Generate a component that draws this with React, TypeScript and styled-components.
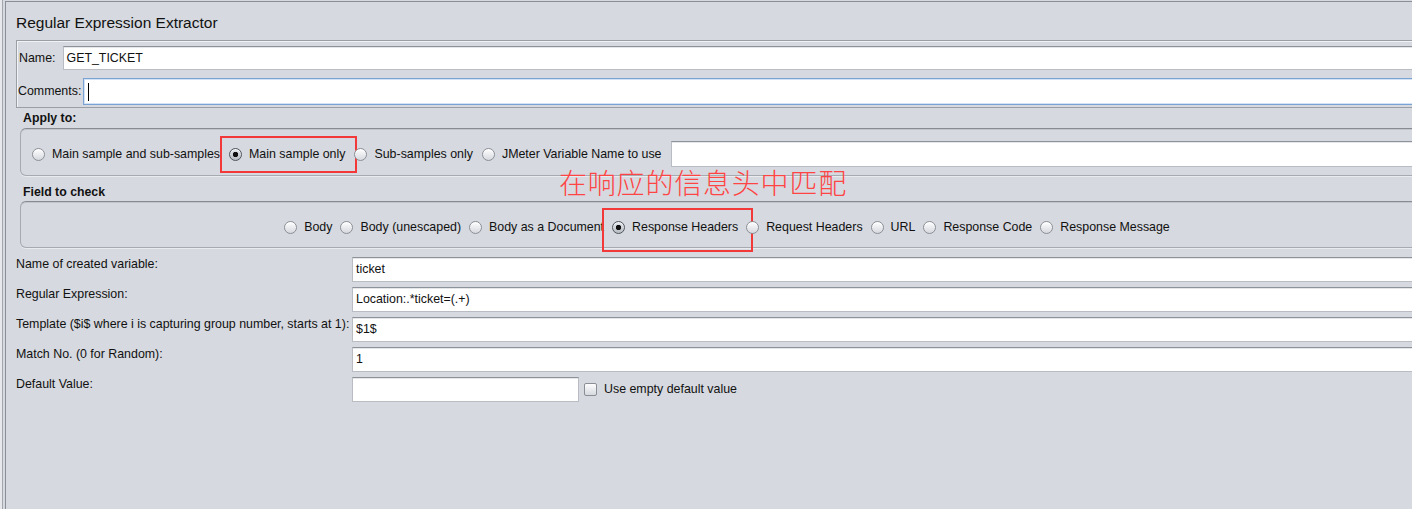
import React from "react";
import styled, { createGlobalStyle } from "styled-components";

const GlobalStyle = createGlobalStyle`
  html, body {
    margin: 0;
    padding: 0;
    overflow: hidden;
    background: #d6d9df;
  }
  body {
    font-family: "Liberation Sans", Arial, sans-serif;
  }
`;

const Page = styled.div`
  position: relative;
  width: 1446px;
  height: 509px;
  box-sizing: border-box;
  padding: 1px 0 0 5px;
  background: #d6d9df;
  box-shadow: inset 2px 0 0 #e6e8ec, inset 3px 0 0 #a2a6ad;
  font-family: "Liberation Sans", Arial, sans-serif;
  font-size: 12.4px;
  color: #111;
`;

const Frame = styled.div`
  height: 100%;
  box-sizing: border-box;
  border-left: 1px solid #8a8e96;
  border-top: 1px solid #8a8e96;
  padding: 0 12px 0 10px;
  display: flex;
  flex-direction: column;
`;

const Title = styled.div`
  margin-top: 12px;
  font-size: 15.5px;
  line-height: 18px;
  color: #111;
`;

const EtchedPanel = styled.div`
  margin-top: 8px;
  border: 1px solid #9a9ea5;
  box-shadow: inset 1px 1px 0 #f2f3f5;
  padding: 5px 0 2px 0;
  display: flex;
  flex-direction: column;
  gap: 8px;
`;

const Row = styled.div<{ $gap: number; $indent: number }>`
  display: flex;
  align-items: center;
  gap: ${(p) => p.$gap}px;
  padding-left: ${(p) => p.$indent}px;
`;

const Label = styled.span`
  white-space: nowrap;
  line-height: 15px;
`;

const Field = styled.div<{ $h: number; $w?: number }>`
  box-sizing: border-box;
  height: ${(p) => p.$h}px;
  ${(p) => (p.$w ? `width: ${p.$w}px; flex: none;` : "flex: 1;")}
  background: #fff;
  border: 1px solid #b9bcc2;
  border-top-color: #8e9299;
  box-shadow: inset 0 1px 0 #e4e6ea;
  padding-left: 3px;
  display: flex;
  align-items: center;
  white-space: nowrap;
  line-height: 15px;
`;

const FocusField = styled(Field)`
  border: 1px solid #7aa3d4;
  box-shadow: inset 0 0 0 1px #d3e2f4;
`;

const Caret = styled.span`
  display: block;
  width: 1px;
  height: 18px;
  margin-left: 1px;
  background: #000;
`;

const Section = styled.div`
  position: relative;
  margin-left: 4px;
`;

const SectionLabel = styled.div<{ $top: number }>`
  margin-top: ${(p) => p.$top}px;
  padding-left: 3px;
  font-weight: bold;
  font-size: 12.3px;
  line-height: 14px;
`;

const RoundPanel = styled.div<{ $top: number; $center?: boolean; $pb: number; $gap: number }>`
  margin-top: ${(p) => p.$top}px;
  border: 1px solid #a6aab1;
  border-top-color: #878b93;
  border-radius: 6px;
  box-shadow: inset 0 1px 0 #c2c5cb, 0 1px 0 #e9ebee;
  padding: 12px 0 ${(p) => p.$pb}px ${(p) => (p.$center ? 0 : 11)}px;
  display: flex;
  align-items: center;
  justify-content: ${(p) => (p.$center ? "center" : "flex-start")};
  min-height: 26px;
  gap: ${(p) => p.$gap}px;
`;

const RadioItem = styled.span`
  position: relative;
  display: inline-flex;
  align-items: center;
  gap: 7px;
  white-space: nowrap;
  line-height: 15px;
`;

const RadioCircle = styled.span<{ $on?: boolean }>`
  box-sizing: border-box;
  width: 13px;
  height: 13px;
  border-radius: 50%;
  flex: none;
  border: 1px solid ${(p) => (p.$on ? "#4f545c" : "#8b8f96")};
  background: ${(p) =>
    p.$on
      ? "radial-gradient(circle at 50% 50%, #111 0 2.4px, transparent 3px), linear-gradient(#e4e7ec, #b8bdc5)"
      : "linear-gradient(#ffffff, #d5d8de)"};
  box-shadow: inset 0 1px 1px rgba(255, 255, 255, 0.8);
`;

const Highlight = styled.span<{ $t: number; $r: number; $b: number; $l: number }>`
  position: absolute;
  top: ${(p) => p.$t}px;
  right: ${(p) => p.$r}px;
  bottom: ${(p) => p.$b}px;
  left: ${(p) => p.$l}px;
  border: 2px solid #f23838;
  pointer-events: none;
`;

const Annotation = styled.div`
  position: absolute;
  left: 539px;
  top: -8px;
  font-family: "Noto Sans CJK SC", "Noto Sans", sans-serif;
  font-weight: 300;
  font-size: 28px;
  line-height: 28px;
  letter-spacing: 0.8px;
  color: #ff4444;
  white-space: nowrap;
`;

const Form = styled.div`
  margin-top: 9px;
  display: grid;
  grid-template-columns: 336px 1fr;
  row-gap: 5px;
  align-items: start;
`;

const FormCell = styled.div`
  display: flex;
  align-items: center;
`;

const CheckBox = styled.span`
  box-sizing: border-box;
  width: 13px;
  height: 13px;
  margin-left: 5px;
  border-radius: 2px;
  border: 1px solid #8a8e95;
  background: linear-gradient(#fdfdfe, #d6d9de);
  flex: none;
`;

const CheckLabel = styled.span`
  margin-left: 7px;
  white-space: nowrap;
  line-height: 15px;
`;

type RadioProps = {
  label: string;
  on?: boolean;
  box?: { t: number; r: number; b: number; l: number };
};

const Radio = ({ label, on, box }: RadioProps) => (
  <RadioItem>
    <RadioCircle $on={on} />
    {label}
    {box && <Highlight $t={box.t} $r={box.r} $b={box.b} $l={box.l} />}
  </RadioItem>
);

const formRows: { label: string; value: string }[] = [
  { label: "Name of created variable:", value: "ticket" },
  { label: "Regular Expression:", value: "Location:.*ticket=(.+)" },
  { label: "Template ($i$ where i is capturing group number, starts at 1):", value: "$1$" },
  { label: "Match No. (0 for Random):", value: "1" },
];

export default function App() {
  return (
    <>
      <GlobalStyle />
      <Page>
        <Frame>
          <Title>Regular Expression Extractor</Title>

          <EtchedPanel>
            <Row $gap={7} $indent={2}>
              <Label>Name:</Label>
              <Field $h={24}>GET_TICKET</Field>
            </Row>
            <Row $gap={2} $indent={1}>
              <Label>Comments:</Label>
              <FocusField $h={27}>
                <Caret />
              </FocusField>
            </Row>
          </EtchedPanel>

          <Section>
            <SectionLabel $top={3}>Apply to:</SectionLabel>
            <RoundPanel $top={3} $pb={8} $gap={9}>
              <Radio label="Main sample and sub-samples" />
              <Radio label="Main sample only" on box={{ t: -11, r: -12, b: -11, l: -9 }} />
              <Radio label="Sub-samples only" />
              <Radio label="JMeter Variable Name to use" />
              <Field $h={26} />
            </RoundPanel>
          </Section>

          <Section>
            <SectionLabel $top={9}>Field to check</SectionLabel>
            <Annotation>在响应的信息头中匹配</Annotation>
            <RoundPanel $top={2} $pb={7} $gap={8} $center>
              <Radio label="Body" />
              <Radio label="Body (unescaped)" />
              <Radio label="Body as a Document" />
              <Radio label="Response Headers" on box={{ t: -12, r: -15, b: -17, l: -10 }} />
              <Radio label="Request Headers" />
              <Radio label="URL" />
              <Radio label="Response Code" />
              <Radio label="Response Message" />
            </RoundPanel>
          </Section>

          <Form>
            {formRows.map((r) => (
              <React.Fragment key={r.label}>
                <Label>{r.label}</Label>
                <FormCell>
                  <Field $h={25}>{r.value}</Field>
                </FormCell>
              </React.Fragment>
            ))}
            <Label>Default Value:</Label>
            <FormCell>
              <Field $h={25} $w={227} />
              <CheckBox />
              <CheckLabel>Use empty default value</CheckLabel>
            </FormCell>
          </Form>
        </Frame>
      </Page>
    </>
  );
}
